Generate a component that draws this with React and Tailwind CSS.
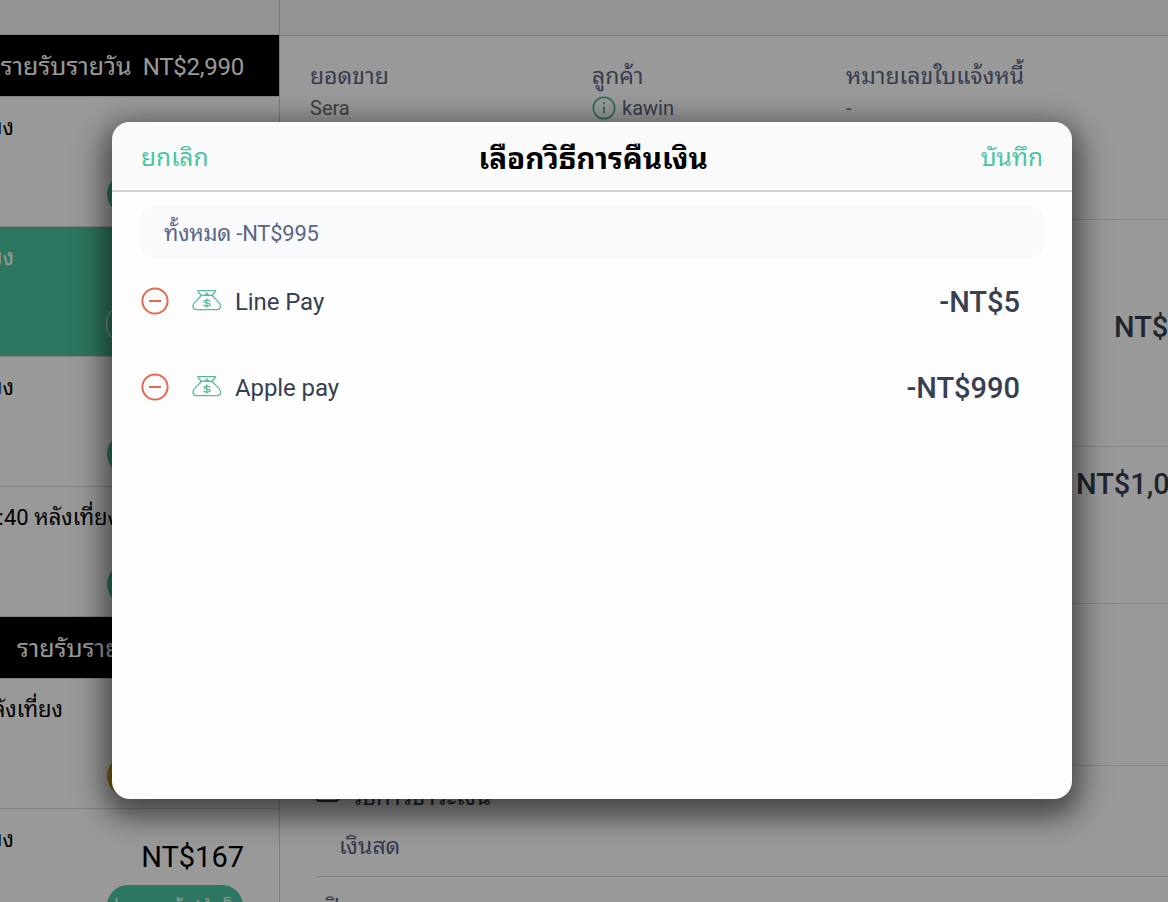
import React from "react";

const payments = [
  { id: 1, name: "Line Pay", amount: "-NT$5" },
  { id: 2, name: "Apple pay", amount: "-NT$990" }
];

// ---------- icons ----------
const MinusIcon = () => (
  <svg width="28" height="28" viewBox="0 0 28 28" fill="none" stroke="#e06b52" strokeWidth="2">
    <circle cx="14" cy="14" r="12.6" />
    <path d="M8 14h12" />
  </svg>
);

const MoneyBagIcon = () => (
  <svg width="30" height="22" viewBox="0 0 30 22" fill="none" stroke="#5fb59f" strokeWidth="1.3" strokeLinejoin="round" strokeLinecap="round">
    <path d="M9.3 5.2 6.1 1.6c-.5-.6-.3-1 .4-1h16.4c.7 0 .9.4.4 1l-3.200 3.600" />
    <path d="M9.300 5.400h11" />
    <path d="M9.300 5.400C7.500 8.800 1 12 1 16.200c0 2.200 1.500 3.400 4 3.400h19.600c2.500 0 4-1.200 4-3.400 0-4.200-6.500-7.400-8.300-10.800" />
    <path d="m12.600 5.300 2.200-1.700 2.200 1.700M14.800 3.600V2.600" />
    <path d="M17.900 11.200c-.6-.7-1.700-1-3-1-1.700 0-2.900.5-2.900 1.400 0 2.100 6.100.9 6.100 3 0 1-1.400 1.500-3.200 1.500-1.400 0-2.500-.3-3.100-1M14.800 9v8.200" />
  </svg>
);

const InfoIcon = () => (
  <svg width="24" height="24" viewBox="0 0 24 24" fill="none" stroke="#42b690" strokeWidth="1.6">
    <circle cx="12" cy="12" r="10.700" />
    <path d="M12 10.500v7M12 6.300v2" strokeWidth="1.800" />
  </svg>
);

// ---------- left list ----------
const SaleRow = ({ time, timeWidth, pill, amount, status, active }) => (
  <div className={`relative h-[130px] shrink-0 border-t border-[#d9d9d9] ${active ? "bg-[#4bc5a2] text-white" : "text-black"}`}>
    <div className={`mt-[14px] flex h-8 items-center justify-end overflow-hidden text-[22px] whitespace-nowrap ${timeWidth}`}>
      {time}
    </div>
    <div className="absolute top-[29px] right-[35px] text-[29px] leading-[38px]">{amount}</div>
    <div className={`absolute top-[76px] right-[36px] flex h-[42px] items-center justify-center rounded-full text-[18px] text-white ${pill}`}>
      {status}
    </div>
  </div>
);

const DayBand = ({ children }) => (
  <div className="flex h-[62px] shrink-0 items-center overflow-hidden border-t border-[#d9d9d9] bg-black pt-[2px] text-[25px] whitespace-nowrap text-white">
    {children}
  </div>
);

const SalesList = () => (
  <div className="flex h-full w-[280px] shrink-0 flex-col overflow-hidden border-r border-[#d0d0d0] bg-white">
    <div className="h-[34px] shrink-0 bg-[#f7f7f7]" />
    <DayBand>
      <div className="flex w-[244px] items-baseline justify-end gap-[11px]">
        <span>รายรับรายวัน</span>
        <span className="text-[24px] tracking-[-0.25px]">NT$2,990</span>
      </div>
    </DayBand>
    <SaleRow time="10:52 หลังเที่ยง" timeWidth="w-[14px]" pill="w-[136px] bg-[#4bc5a2]" />
    <SaleRow time="10:50 หลังเที่ยง" timeWidth="w-[14px]" pill="w-[137px] border border-white" active />
    <SaleRow time="10:45 หลังเที่ยง" timeWidth="w-[14px]" pill="w-[136px] bg-[#4bc5a2]" />
    <SaleRow time="10:40 หลังเที่ยง" timeWidth="w-[119px]" pill="w-[136px] bg-[#4bc5a2]" />
    <DayBand>
      <span className="pl-[17px]">รายรับรายวัน</span>
    </DayBand>
    <SaleRow time="9:20 หลังเที่ยง" timeWidth="w-[63px]" pill="w-[136px] bg-[#d9a62e]" />
    <SaleRow time="8:15 หลังเที่ยง" timeWidth="w-[14px]" pill="w-[136px] bg-[#4bc5a2]" amount="NT$167" status="ส่งมอบแล้ว/สำเร็จ" />
  </div>
);

// ---------- right detail ----------
const Field = ({ label, children }) => (
  <div>
    <div className="h-8 text-[23px] leading-[34px]">{label}</div>
    <div className="flex h-8 items-center gap-1.5 text-[20px]">{children}</div>
  </div>
);

const SaleDetail = () => (
  <div className="flex h-full flex-1 flex-col overflow-hidden bg-white text-[#5c6584]">
    <div className="h-[36px] shrink-0 border-b border-[#d0d0d0] bg-[#f7f7f7]" />
    <div className="grid h-[184px] shrink-0 grid-cols-[282px_254px_1fr] border-b border-[#e0e0e0] pt-[24px] pl-[30px]">
      <Field label="ยอดขาย">
        <span className="text-[#6d6d6d]">Sera</span>
      </Field>
      <Field label="ลูกค้า">
        <InfoIcon />
        <span>kawin</span>
      </Field>
      <Field label="หมายเลขใบแจ้งหนี้">
        <span className="text-[#6d6d6d]">-</span>
      </Field>
    </div>
    <div className="h-[227px] shrink-0 overflow-hidden border-b border-[#e0e0e0] pt-[88px] pl-[834px] text-[29px] leading-[38px] font-medium text-[#383f50]">
      NT$995
    </div>
    <div className="h-[157px] shrink-0 overflow-hidden border-b border-[#e0e0e0] pt-[18px] pl-[796px] text-[29px] leading-[38px] font-medium text-[#383f50]">
      NT$1,000
    </div>
    <div className="h-[162px] shrink-0 border-b border-[#e0e0e0]" />
    <div className="flex h-[110px] shrink-0 flex-col pl-[36px]">
      <div className="flex h-[62px] items-center gap-3 text-[24px] text-[#383f50]">
        <div className="-mt-[9px] h-[18px] w-[23px] rounded-[3px] border-2 border-[#383f50]" />
        <span>วิธีการชำระเงิน</span>
      </div>
      <div className="h-[48px] pl-[23px] text-[23px] leading-[38px]">เงินสด</div>
    </div>
    <div className="ml-[36px] shrink-0 border-t border-[#d0d2e0] pt-[15px] pl-[9px] text-[23px] leading-8">ปิด</div>
  </div>
);

const RefundModal = () => (
  <div className="h-[677px] w-[960px] overflow-hidden rounded-[18px] bg-[#fdfdfd] shadow-[0_10px_30px_8px_rgba(0,0,0,0.55)]">
    <div className="flex h-[70px] items-center justify-between border-b-2 border-[#cdd1d5] bg-[#fafafa] px-[29px] pt-[4px] text-[24.500px] text-[#4bc5a2]">
      <button>ยกเลิก</button>
      <div className="mr-[3px] pt-[2px] text-[29.600px] leading-[40px] font-bold text-black">เลือกวิธีการคืนเงิน</div>
      <button>บันทึก</button>
    </div>
    <div className="px-[29px] pt-[14px]">
      <div className="flex h-[52px] items-center rounded-[12px] bg-[#f8fafc] px-[23px] pt-[2px] text-[22px] tracking-[-0.25px] text-[#5c6584]">
        ทั้งหมด -NT$995
      </div>
      {payments.map(p => (
        <div key={p.id} className="flex h-[86px] items-center text-[#383f50]">
          <MinusIcon />
          <div className="ml-[23px]">
            <MoneyBagIcon />
          </div>
          <span className="ml-[13px] pt-[2px] text-[24px] tracking-[-0.1px]">{p.name}</span>
          <span className="mr-[23px] ml-auto pt-[3px] text-[29px] font-medium">{p.amount}</span>
        </div>
      ))}
    </div>
  </div>
);

export default function App() {
  return (
    <div className="relative flex h-[902px] w-[1168px] overflow-hidden font-[Roboto,'Noto_Sans_Thai_Looped','Noto_Looped_Thai','Droid_Sans_Thai',Loma,'Noto_Sans_Thai','Noto_Sans',sans-serif]">
      <SalesList />
      <SaleDetail />
      <div className="absolute inset-0 flex items-start justify-center bg-black/40 pt-[122px] pl-[16px]">
        <RefundModal />
      </div>
    </div>
  );
}
